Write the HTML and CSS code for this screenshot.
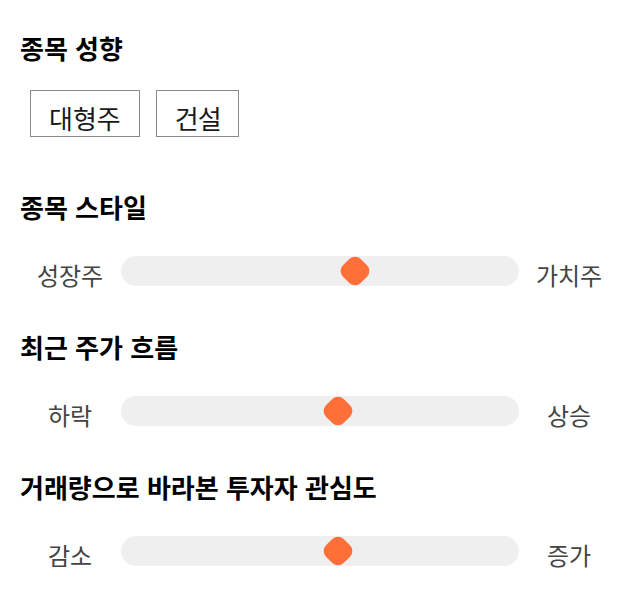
FILE: index.html
```html
<!DOCTYPE html>
<html lang="ko">

<head>
    <meta charset="UTF-8">
    <meta name="viewport" content="width=device-width, initial-scale=1.0">
    <title>종목 분석</title>
    <link rel="stylesheet" href="styles.css">
</head>

<body>
    <div class="container">
        <div class="section">
            <h2>종목 성향</h2>
            <ul class="tags">
                <li>대형주</li>
                <li>건설</li>
            </ul>
        </div>

        <div class="section">
            <h2>종목 스타일</h2>
            <div class="scale">
                <span class="label">성장주</span>
                <div class="track">
                    <span class="thumb" style="left: 58.8%"></span>
                </div>
                <span class="label">가치주</span>
            </div>
        </div>

        <div class="section">
            <h2>최근 주가 흐름</h2>
            <div class="scale">
                <span class="label">하락</span>
                <div class="track">
                    <span class="thumb" style="left: 54.6%"></span>
                </div>
                <span class="label">상승</span>
            </div>
        </div>

        <div class="section">
            <h2>거래량으로 바라본 투자자 관심도</h2>
            <div class="scale">
                <span class="label">감소</span>
                <div class="track">
                    <span class="thumb" style="left: 54.6%"></span>
                </div>
                <span class="label">증가</span>
            </div>
        </div>
    </div>
</body>

</html>
```

FILE: styles.css
```css
body {
    margin: 0;
    background: #fff;
    font-family: "Noto Sans CJK KR", "Noto Sans", sans-serif;
    color: #111;
}

.container {
    padding: 30px 20px 0;
    display: flex;
    flex-direction: column;
    gap: 39px;
}

.section h2 {
    margin: 0;
    font-size: 26px;
    font-weight: 700;
    line-height: 36px;
    color: #000;
}

.tags {
    list-style: none;
    margin: 24px 0 13px 10px;
    padding: 0;
    display: flex;
    gap: 16px;
}

.tags>li {
    border: 1px solid #8a8a8a;
    padding: 9px 18px 0;
    line-height: 36px;
    font-size: 26px;
    color: #1a1a1a;
}

.tags>li+li {
    letter-spacing: -1px;
    padding: 9px 17px 0 18px;
}

.scale {
    margin-top: 31px;
    display: flex;
    align-items: flex-start;
}

.scale .label {
    width: 100px;
    text-align: center;
    font-size: 24px;
    line-height: 30px;
    padding-top: 4px;
    color: #444;
}

.track {
    position: relative;
    width: 398px;
    height: 30px;
    margin-left: 1px;
    background: #efefef;
    border-radius: 15px;
}

.thumb {
    position: absolute;
    top: 50%;
    width: 25px;
    height: 25px;
    background: #ff7038;
    border-radius: 8px;
    transform: translate(-50%, -50%) rotate(45deg);
}
```
